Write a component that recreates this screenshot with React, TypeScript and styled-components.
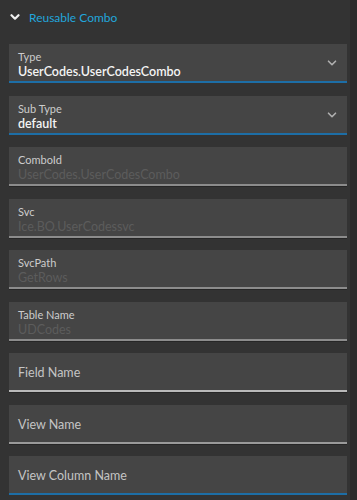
import styled, { createGlobalStyle } from "styled-components";

const Global = createGlobalStyle`
    html, body {
        margin:0;
        padding:0;
        background:#333333;
    }
    * { box-sizing:border-box; }
`

const Page = styled.div`
    width:357px;
    height:500px;
    overflow:hidden;
    display:flex;
    background:#333333;
    font-family:"Source Sans Pro", Lato, "Open Sans", sans-serif;
`

const Content = styled.div`
    flex:1;
    display:flex;
    flex-direction:column;
`

const Track = styled.div`
    width:7px;
    background:#2c2c2c;
`

const Header = styled.div`
    height:34px;
    display:flex;
    align-items:center;
    gap:9px;
    padding:0 0 0 10px;
    color:#22a6dc;
    font-size:12px;
    svg { color:#f0f0f0; }
`

const List = styled.div`
    display:flex;
    flex-direction:column;
    gap:12.5px;
    padding:10px 3px 0 9px;
`

type Tone = "active" | "disabled" | "idle" | "light";

const lines: Record<Tone, string> = {
    active: "#1d6ea6",
    disabled: "#8c8c8c",
    idle: "#9a9a9a",
    light: "#b9b9b9",
}

const Field = styled.div<{ $tone: Tone; $empty?: boolean }>`
    position:relative;
    height:39px;
    background:#454545;
    border-bottom:2px solid ${({ $tone }) => lines[$tone]};
    box-shadow:${({ $tone }) => $tone === "active" ? "none" : "0 1px 0 #262626"};
    padding:${({ $empty }) => $empty ? "3px 9px 0" : "6px 9px 0"};
    display:flex;
    flex-direction:column;
    justify-content:${({ $empty }) => $empty ? "center" : "flex-start"};
`

const Label = styled.div<{ $big?: boolean }>`
    font-size:${({ $big }) => $big ? "12.5px" : "11px"};
    line-height:14px;
    color:${({ $big }) => $big ? "#c4c4c4" : "#cccccc"};
`

const Value = styled.div<{ $disabled?: boolean }>`
    font-size:12.5px;
    line-height:16px;
    font-weight:${({ $disabled }) => $disabled ? 400 : 600};
    color:${({ $disabled }) => $disabled ? "#5c5c5c" : "#f4f4f4"};
    white-space:nowrap;
`

const Caret = styled.div`
    position:absolute;
    right:10px;
    top:14px;
    color:#b0b0b0;
    display:flex;
`

function Chevron({ size = 10, width = 2 }: { size?: number; width?: number }) {
    return (
        <svg width={size} height={size} viewBox="0 0 10 10" fill="none">
            <path d="M1.5 3.2 L5 6.7 L8.5 3.2" stroke="currentColor" strokeWidth={width} strokeLinecap="round" strokeLinejoin="round" />
        </svg>
    )
}

const fields: { label: string; value?: string; tone: Tone; select?: boolean; disabled?: boolean }[] = [
    { label: "Type", value: "UserCodes.UserCodesCombo", tone: "active", select: true },
    { label: "Sub Type", value: "default", tone: "active", select: true },
    { label: "ComboId", value: "UserCodes.UserCodesCombo", tone: "disabled", disabled: true },
    { label: "Svc", value: "Ice.BO.UserCodessvc", tone: "disabled", disabled: true },
    { label: "SvcPath", value: "GetRows", tone: "disabled", disabled: true },
    { label: "Table Name", value: "UDCodes", tone: "disabled", disabled: true },
    { label: "Field Name", tone: "light" },
    { label: "View Name", tone: "idle" },
    { label: "View Column Name", tone: "active" },
]

export default function App() {
    return (
        <Page>
            <Global />
            <Content>
                <Header>
                    <Chevron size={10} width={2.2} />
                    <span>Reusable Combo</span>
                </Header>
                <List>
                    {fields.map((f) => (
                        <Field key={f.label} $tone={f.tone} $empty={!f.value}>
                            <Label $big={!f.value}>{f.label}</Label>
                            {f.value && <Value $disabled={f.disabled}>{f.value}</Value>}
                            {f.select && (
                                <Caret><Chevron size={10} width={1.6} /></Caret>
                            )}
                        </Field>
                    ))}
                </List>
            </Content>
            <Track />
        </Page>
    )
}
